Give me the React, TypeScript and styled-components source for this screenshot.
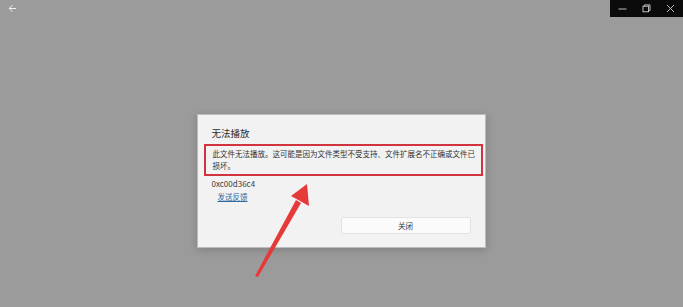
import styled, { createGlobalStyle } from "styled-components";

const GlobalStyle = createGlobalStyle`
  html, body {
    margin: 0;
    padding: 0;
    background: #9b9b9b;
  }
  body {
    font-family: "Noto Sans CJK SC", "Noto Sans", sans-serif;
  }
`;

const Page = styled.div`
  position: relative;
  width: 683px;
  height: 307px;
  overflow: hidden;
  background: #9b9b9b;
  display: flex;
  flex-direction: column;
`;

const TopBar = styled.div`
  height: 17px;
  display: flex;
  align-items: flex-start;
  justify-content: space-between;
`;

const BackButton = styled.div`
  width: 24px;
  height: 17px;
  display: flex;
  align-items: center;
  justify-content: center;
  color: #f0f0f0;
`;

const WindowControls = styled.div`
  width: 73px;
  height: 17px;
  background: #0b0b0b;
  display: grid;
  grid-template-columns: repeat(3, 1fr);
  align-items: center;
  justify-items: center;
  color: #cfcfcf;
`;

const Dialog = styled.div`
  align-self: center;
  margin-top: 97px;
  margin-left: -1px;
  width: 289px;
  height: 134px;
  box-sizing: border-box;
  background: #f2f2f2;
  border: 1px solid #bdbdbd;
  box-shadow: 0 2px 8px rgba(0, 0, 0, 0.18);
  padding: 11px 2px 0 6px;
  display: flex;
  flex-direction: column;
  color: #2b2b2b;
`;

const Title = styled.div`
  font-size: 9.5px;
  line-height: 14px;
  padding-left: 8px;
  margin-bottom: 4px;
`;

const Message = styled.div`
  border: 2px solid #d1343f;
  padding: 2px 3px 2px 7px;
  font-size: 7.5px;
  line-height: 12px;
  color: #333;
`;

const Code = styled.div`
  padding-left: 8px;
  margin-top: 2px;
  font-size: 8px;
  line-height: 12px;
  color: #3a3a3a;
`;

const FeedbackLink = styled.a`
  margin-left: 14px;
  margin-top: 1px;
  font-size: 7.5px;
  line-height: 12px;
  color: #2d6aa3;
  text-decoration: underline;
  align-self: flex-start;
`;

const Footer = styled.div`
  display: flex;
  justify-content: flex-end;
  margin-top: 14px;
  padding-right: 12px;
`;

const CloseButton = styled.button`
  width: 130px;
  height: 17px;
  box-sizing: border-box;
  background: #fbfbfb;
  border: 1px solid #e2e2e2;
  border-radius: 2px;
  font-family: inherit;
  font-size: 7.5px;
  color: #333;
  padding: 0;
`;

const Annotation = styled.svg`
  position: absolute;
  left: 0;
  top: 0;
  pointer-events: none;
`;

export default function App() {
  return (
    <>
      <GlobalStyle />
      <Page>
        <TopBar>
          <BackButton>
            <svg width="9" height="9" viewBox="0 0 9 9">
              <path d="M8 4.5H1.2M4.5 1.2L1.2 4.5L4.5 7.8" stroke="currentColor" strokeWidth="1" fill="none" />
            </svg>
          </BackButton>
          <WindowControls>
            <svg width="9" height="9" viewBox="0 0 9 9">
              <path d="M0.5 5H8.5" stroke="currentColor" strokeWidth="0.9" />
            </svg>
            <svg width="9" height="9" viewBox="0 0 9 9">
              <rect x="1" y="2.2" width="5.6" height="5.6" stroke="currentColor" strokeWidth="0.9" fill="none" />
              <path d="M2.4 2.2V0.9H8V6.5H6.6" stroke="currentColor" strokeWidth="0.9" fill="none" />
            </svg>
            <svg width="9" height="9" viewBox="0 0 9 9">
              <path d="M1 1L8 8M8 1L1 8" stroke="currentColor" strokeWidth="0.9" />
            </svg>
          </WindowControls>
        </TopBar>

        <Dialog>
          <Title>无法播放</Title>
          <Message>此文件无法播放。这可能是因为文件类型不受支持、文件扩展名不正确或文件已损坏。</Message>
          <Code>0xc00d36c4</Code>
          <FeedbackLink href="#">发送反馈</FeedbackLink>
          <Footer>
            <CloseButton>关闭</CloseButton>
          </Footer>
        </Dialog>

        <Annotation width="683" height="307" viewBox="0 0 683 307">
          <polygon points="255,276 258,277 301,203 296,200" fill="#e63a3a" />
          <polygon points="307,184 291,196 309,206" fill="#e63a3a" />
        </Annotation>
      </Page>
    </>
  );
}
